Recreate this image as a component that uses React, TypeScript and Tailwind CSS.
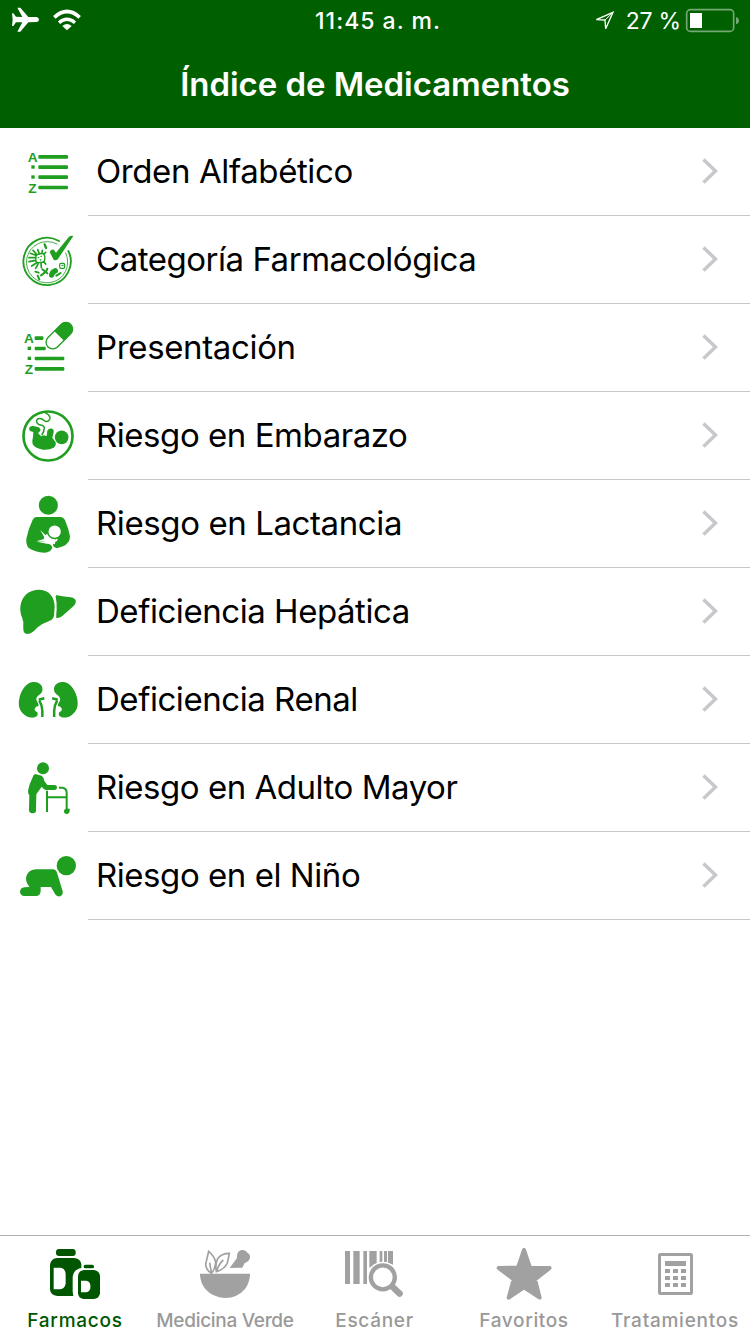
import type { ReactNode } from 'react';

const G = '#1f9e20';
const GRAY = '#a1a1a1';

function AirplaneIcon() {
  return (
    <svg className="absolute left-0 top-0" width="90" height="40" viewBox="0 0 270 120" fill="#fff">
      <path d="M36 40 L40 40 L48 50 L67 51 L52 23 L61 23 L85 51 L110 51 Q117 53 117 59 Q117 65 110 66 L85 67 L61 95 L52 95 L67 67 L48 67 L40 78 L36 78 L38 59 Z" />
      <path d="M201 91 L187 78 Q201 66 215 78 Z" />
      <path d="M177 68 Q201 48 225 68" fill="none" stroke="#fff" strokeWidth="10" />
      <path d="M163 52 Q201 17 239 52" fill="none" stroke="#fff" strokeWidth="11" />
    </svg>
  );
}

function BatteryIcon() {
  return (
    <svg className="absolute right-0 top-0" width="160" height="40" viewBox="645 0 480 120" fill="none">
      <path d="M664 59 L714 37 L692 86 L690 60 Z" stroke="#fff" strokeWidth="4" />
      <path d="M690 60 L714 37" stroke="#fff" strokeWidth="3" />
      <rect x="935" y="29" width="141" height="65" rx="11" stroke="#73a773" strokeWidth="5" />
      <rect x="945" y="39" width="36" height="45" fill="#fff" />
      <path d="M1083 51 Q1092 54 1092 62 Q1092 70 1083 73 Z" fill="#73a773" />
    </svg>
  );
}

function Bars({ x, y, w }: { x: number; y: number[]; w: number[] }) {
  return (
    <>
      {y.map((v, i) => (
        <rect key={v} x={x} y={v} width={w[i]} height="11" rx="3" fill={G} />
      ))}
    </>
  );
}

const letter = "font-['Liberation_Sans',sans-serif] text-[41px] font-bold";

const rows: { label: string; box: string; track: string; icon: ReactNode }[] = [
  {
    label: 'Orden Alfabético',
    box: '-30 -30 264 264',
    track: 'tracking-[-0.4px]',
    icon: (
      <>
        <text x="53" y="71" className={letter} fill={G}>A</text>
        <text x="55" y="164" className={letter} fill={G}>Z</text>
        <rect x="64" y="82" width="10" height="10" fill={G} />
        <rect x="64" y="112" width="10" height="10" fill={G} />
        <Bars x={85} y={[51, 82, 112, 143]} w={[89, 89, 89, 89]} />
      </>
    ),
  },
  {
    label: 'Categoría Farmacológica',
    box: '-30 234 264 264',
    track: 'tracking-[-0.47px]',
    icon: (
      <g fill="none" stroke={G} strokeLinecap="round">
        <path d="M147 309 A71 71 0 1 0 175 339" strokeWidth="5.500" />
        <path d="M141 318 A62 62 0 1 0 167 345" strokeWidth="2.500" />
        <path d="M119 342 Q126 332 132 336 L138 344 L177 296 Q183 292 190 294 L144 363 Q137 370 131 365 Z" fill={G} stroke="none" />
        <path d="M104 319 L108 330" strokeWidth="7" />
        <path d="M78 352 Q88 345 100 347 Q106 352 104 365 Q104 374 91 373 Q79 376 77 369 Z" strokeWidth="4" />
        <path d="M77 352 L61 346 M77 359 L57 359 M77 367 L57 371 M79 375 L65 384 M85 376 L77 391 M93 375 L94 389 M101 371 L107 378 M80 349 L69 337 M88 347 L83 335 M96 346 L97 337 M102 348 L107 343" strokeWidth="5" />
        <path d="M85 359 L86 359 M93 355 L94 355 M91 366 L92 366" strokeWidth="4" />
        <path d="M125 411 Q126 402 136 398" strokeWidth="16" />
        <path d="M139 413 L152 405 M76 401 L86 404 M83 413 L88 424 M93 412 L104 404 M97 394 L112 406 M112 392 L108 402" strokeWidth="6" />
        <rect x="149" y="376" width="15" height="15" rx="4" strokeWidth="3.500" />
        <path d="M155 382 H160" strokeWidth="3" />
      </g>
    ),
  },
  {
    label: 'Presentación',
    box: '-30 -18 264 264',
    track: 'tracking-[-0.35px]',
    icon: (
      <>
        <text x="42" y="99" className={letter} fill={G}>A</text>
        <text x="44" y="192" className={letter} fill={G}>Z</text>
        <rect x="53" y="110" width="10" height="10" fill={G} />
        <rect x="53" y="140" width="10" height="10" fill={G} />
        <Bars x={74} y={[79, 110, 140, 171]} w={[26, 33, 89, 89]} />
        <g transform="translate(148 77) rotate(-45)">
          <rect x="-48" y="-20" width="96" height="40" rx="20" fill="#fff" stroke={G} strokeWidth="4" />
          <path d="M-1 -21 H28 A21 21 0 0 1 28 21 H-1 Z" fill={G} />
        </g>
      </>
    ),
  },
  {
    label: 'Riesgo en Embarazo',
    box: '-30 246 264 264',
    track: 'tracking-[-0.45px]',
    icon: (
      <>
        <circle cx="114" cy="378" r="73.500" fill="none" stroke={G} strokeWidth="8" />
        <circle cx="155" cy="382" r="20.500" fill={G} />
        <path d="M57 356 Q59 347 70 348 L86 352 Q94 357 90 364 L84 369 L93 379 L102 376 L110 378 L112 362 Q117 353 127 356 Q133 359 131 367 L127 383 L137 397 Q139 408 131 413 Q117 421 99 419 Q76 416 68 403 Q65 395 69 380 L70 366 L60 363 Z" fill={G} />
        <path d="M95 376 Q103 366 103 352 Q99 344 91 345 Q79 342 80 331 Q83 323 96 327 L106 334 Q113 337 119 328 Q122 323 116 315 L106 308" fill="none" stroke={G} strokeWidth="4.500" />
      </>
    ),
  },
  {
    label: 'Riesgo en Lactancia',
    box: '-30 -18 264 264',
    track: 'tracking-[-0.4px]',
    icon: (
      <>
        <circle cx="115" cy="58" r="28.500" fill={G} />
        <path d="M79 93 H150 Q160 93 165 103 Q176 129 180 151 Q180 172 159 181 L143 186 Q132 188 129 178 Q129 169 140 166 L145 157 L131 163 L116 156 L104 166 L80 167 L110 173 Q125 173 127 185 Q123 198 103 200 Q75 198 55 185 Q48 176 49 158 Q55 128 68 101 Q72 94 79 93 Z" fill={G} />
        <path d="M91 132 L106 147 L117 142 L123 152 L136 159 L135 175 L111 166 L79 166 L102 159 L102 152 Z" fill="#fff" />
        <circle cx="134" cy="137" r="20.500" fill="#fff" stroke={G} strokeWidth="4" />
      </>
    ),
  },
  {
    label: 'Deficiencia Hepática',
    box: '-30 246 264 264',
    track: 'tracking-[-0.45px]',
    icon: (
      <>
        <path d="M31 362 C35 330 56 311 88 311 C119 312 133 334 134 362 L132 389 Q130 400 119 404 Q99 411 83 424 Q72 437 62 442 Q47 447 42 439 Q39 433 40 408 Q36 392 33 386 Q30 376 31 362 Z" fill={G} />
        <path d="M142 328 Q156 331 175 333 Q191 333 197 343 Q199 353 190 361 L156 391 Q149 397 139 396 Q138 392 140 370 Q141 351 137 332 Q137 327 142 328 Z" fill={G} />
      </>
    ),
  },
  {
    label: 'Deficiencia Renal',
    box: '-30 -42 264 264',
    track: 'tracking-[-0.45px]',
    icon: (
      <>
        {['', 'translate(229.500 0) scale(-1 1)'].map((t) => (
          <g key={t} transform={t}>
            <path d="M73 36 C90 37 100 48 97 62 C95 73 78 77 79 88 Q79 94 85 101 L86 108 Q79 108 75 114 Q71 122 81 126 Q86 132 80 139 C72 145 56 144 44 135 C27 122 23 105 29 81 C36 54 53 35 73 36 Z" fill={G} />
            <path d="M86 89 L103 85 M88 92 Q97 107 97 122 V141" fill="none" stroke={G} strokeWidth="7.500" />
          </g>
        ))}
      </>
    ),
  },
  {
    label: 'Riesgo en Adulto Mayor',
    box: '-30 222 264 264',
    track: 'tracking-[-0.47px]',
    icon: (
      <>
        <circle cx="99" cy="295" r="18" fill={G} />
        <path d="M76 312 L95 317 Q102 322 103 333 L112 345 H135 Q142 347 141 354 Q140 360 134 360 H107 Q101 358 95 350 L79 373 L78 422 Q77 430 67 430 Q57 429 57 421 L58 375 Q54 372 54 362 L59 343 L71 315 Z" fill={G} />
        <path d="M147 353 H158 Q169 355 170 366 V418 M111 362 V426 M111 382 H170" fill="none" stroke={G} strokeWidth="6" />
        <circle cx="170" cy="424" r="8" fill={G} />
        <rect x="169" y="416" width="10" height="8" fill={G} />
      </>
    ),
  },
  {
    label: 'Riesgo en el Niño',
    box: '-30 486 264 264',
    track: 'tracking-[-0.45px]',
    icon: (
      <>
        <circle cx="169" cy="587" r="29" fill={G} />
        <path d="M78 598 H128 Q137 598 141 608 L158 664 Q160 674 151 679 Q140 681 135 672 L123 651 H92 V664 Q91 678 78 678 H43 Q31 677 30 665 Q31 653 43 652 L59 651 Q48 639 48 625 Q51 600 78 598 Z" fill={G} />
      </>
    ),
  },
];

const tabs: { label: string; box: string; text: string; icon: ReactNode }[] = [
  {
    label: 'Farmacos',
    box: '0 18 450 210',
    text: 'text-[#005700] tracking-[0.75px]',
    icon: (
      <g fill="#005500">
        <rect x="168" y="57" width="59" height="21" rx="9" />
        <path d="M172 84 H222 Q241 86 244 102 V114 Q218 119 218 145 V186 L220 198 H172 Q151 196 150 178 V105 Q152 85 172 84 Z" />
        <path d="M161 113 H181 Q196 115 197 132 V160 Q195 177 180 178 H161 Z" fill="#fff" />
        <rect x="251" y="104" width="31" height="11" rx="5" />
        <path d="M252 120 H282 Q299 123 300 138 V190 Q298 205 283 207 H250 Q235 205 234 190 V138 Q236 122 252 120 Z" />
        <path d="M243 152 H259 Q269 153 271 165 V175 Q269 185 259 187 H243 Z" fill="#fff" />
      </g>
    ),
  },
  {
    label: 'Medicina Verde',
    box: '450 18 450 210',
    text: 'text-[#999] tracking-[-0.3px]',
    icon: (
      <>
        <path d="M600 131 H750 V136 Q748 160 735 177 Q712 204 675 204 Q638 202 616 177 Q602 160 600 136 Z" fill={GRAY} />
        <path d="M689 114 L711 84 Q709 65 724 60 Q737 59 742 68 Q751 72 750 84 Q746 96 734 99 L727 113 Z" fill={GRAY} />
        <path d="M634 130 Q617 119 617 102 L626 64 Q643 78 647 96 Q645 119 634 130 Z M629 98 L634 127 M649 125 Q645 103 653 86 Q664 70 688 70 Q685 86 682 99 Q675 117 649 125 Z M650 122 Q658 100 670 90" fill="none" stroke={GRAY} strokeWidth="5" />
      </>
    ),
  },
  {
    label: 'Escáner',
    box: '150 18 450 210',
    text: 'text-[#999] tracking-[0.7px] pr-px',
    icon: (
      <>
        <path d="M285 63 H300 V162 H285 Z M310 63 H329 V162 H310 Z M340 63 H351 V162 H340 Z M358 63 H380 V103 L358 113 Z M389 63 H397 V97 H389 Z M402 63 H411 V97 H402 Z M414 63 H429 V105 L414 98 Z" fill={GRAY} />
        <circle cx="398.500" cy="142" r="47" fill="#fff" />
        <path d="M428 171 L449 191" stroke={GRAY} strokeWidth="19" strokeLinecap="round" />
        <circle cx="398.500" cy="142" r="36" fill="#fff" stroke={GRAY} strokeWidth="13" />
      </>
    ),
  },
  {
    label: 'Favoritos',
    box: '-150 18 450 210',
    text: 'text-[#999] tracking-[0.65px] pr-0.5',
    icon: (
      <path d="M72 60 L90 113 L149 114 L105 148 L119 203 L72 172 L26 203 L41 148 L-4 114 L54 113 Z" fill={GRAY} stroke={GRAY} strokeWidth="12" strokeLinejoin="round" />
    ),
  },
  {
    label: 'Tratamientos',
    box: '300 18 450 210',
    text: 'text-[#999] tracking-[0.75px]',
    icon: (
      <g fill={GRAY}>
        <rect x="478.500" y="73.500" width="96" height="117" rx="3" fill="none" stroke={GRAY} strokeWidth="9" />
        <rect x="495" y="93" width="63" height="15" />
        {[117, 138, 159].map((y) => [495, 519, 543].map((x) => <rect key={`${x}-${y}`} x={x} y={y} width="15" height="12" />))}
      </g>
    ),
  },
];

export default function App() {
  return (
    <div className="flex h-[1334px] w-[750px] flex-col bg-white font-['Inter',sans-serif]">
      <header className="flex h-32 flex-col bg-[#006000] text-white">
        <div className="relative flex h-10 items-start justify-center">
          <AirplaneIcon />
          <span className="pl-1.5 text-[23px] leading-[42px] font-medium tracking-[1px]">11:45 a. m.</span>
          <span className="absolute top-0 right-[69px] text-[23px] leading-[42px] tracking-[-0.2px]">27 %</span>
          <BatteryIcon />
        </div>
        <h1 className="text-center text-[33px] leading-[88px] font-semibold tracking-[-0.05px]">Índice de Medicamentos</h1>
      </header>
      <main className="flex flex-1 flex-col">
        {rows.map((r) => (
          <div key={r.label} className="flex h-[88px]">
            <svg className="shrink-0" width="88" height="88" viewBox={r.box}>
              {r.icon}
            </svg>
            <div className="flex flex-1 items-center justify-between border-b border-[#c8c7cc] pr-8 pb-0.5 pl-2">
              <span className={`text-[33px] leading-[52px] text-black ${r.track}`}>{r.label}</span>
              <svg width="16" height="26" viewBox="0 0 16 26" fill="none">
                <path d="M1.500 1.500 L13.500 13 L1.500 24.500" stroke="#c7c7cc" strokeWidth="3.500" />
              </svg>
            </div>
          </div>
        ))}
      </main>
      <nav className="flex h-[99px] border-t border-[#b2b2b2]">
        {tabs.map((t) => (
          <div key={t.label} className="flex w-[150px] flex-col items-center">
            <svg className="shrink-0" width="150" height="70" viewBox={t.box}>
              {t.icon}
            </svg>
            <span className={`text-[19px] leading-[30px] font-medium whitespace-nowrap ${t.text}`}>{t.label}</span>
          </div>
        ))}
      </nav>
    </div>
  );
}
